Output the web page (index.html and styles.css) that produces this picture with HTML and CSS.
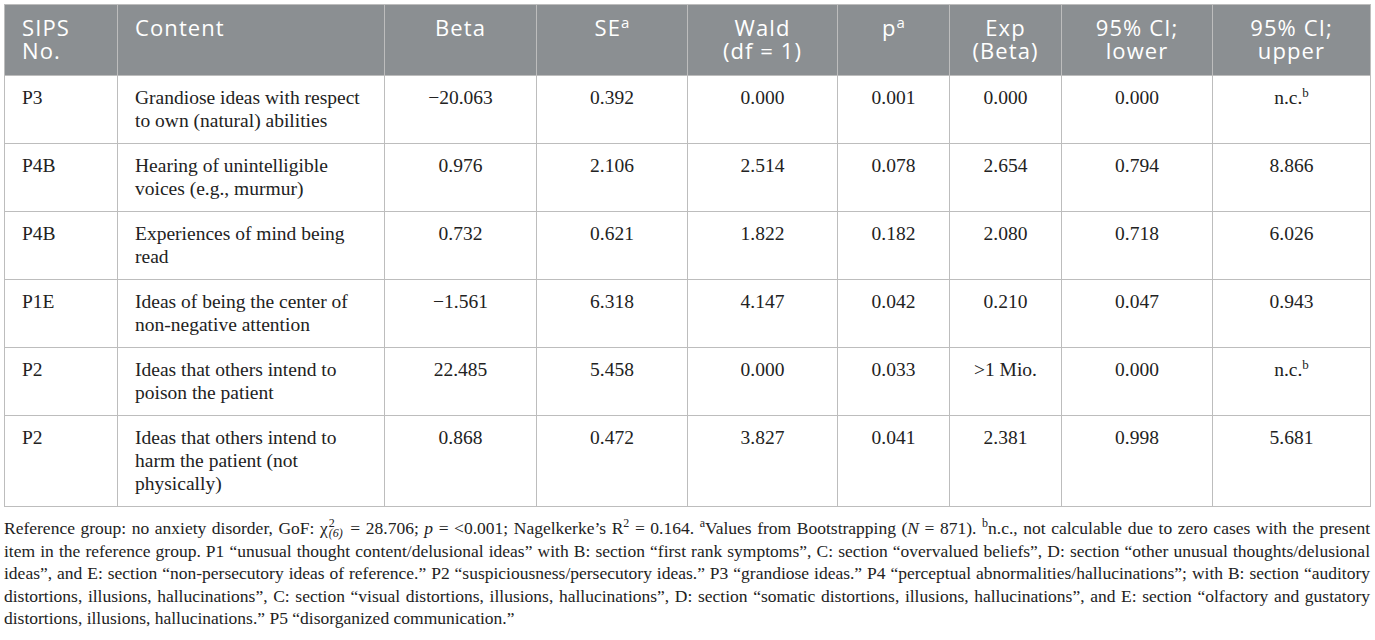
FILE: index.html
```html
<!DOCTYPE html>
<html lang="en">
<head>
<meta charset="utf-8">
<title>SIPS table</title>
<link rel="stylesheet" href="styles.css">
</head>
<body>
<div class="page">
<table class="tbl">
  <colgroup>
    <col class="c1"><col class="c2"><col class="c3"><col class="c4"><col class="c5"><col class="c6"><col class="c7"><col class="c8"><col class="c9">
  </colgroup>
  <thead>
    <tr>
      <th class="left">SIPS<br>No.</th>
      <th class="left">Content</th>
      <th>Beta</th>
      <th>SE<sup>a</sup></th>
      <th>Wald<br>(df = 1)</th>
      <th>p<sup>a</sup></th>
      <th>Exp<br>(Beta)</th>
      <th>95% CI;<br>lower</th>
      <th>95% CI;<br>upper</th>
    </tr>
  </thead>
  <tbody>
    <tr>
      <td class="left">P3</td>
      <td class="left">Grandiose ideas with respect to own (natural) abilities</td>
      <td>−20.063</td><td>0.392</td><td>0.000</td><td>0.001</td><td>0.000</td><td>0.000</td><td>n.c.<sup>b</sup></td>
    </tr>
    <tr>
      <td class="left">P4B</td>
      <td class="left">Hearing of unintelligible voices (e.g., murmur)</td>
      <td>0.976</td><td>2.106</td><td>2.514</td><td>0.078</td><td>2.654</td><td>0.794</td><td>8.866</td>
    </tr>
    <tr>
      <td class="left">P4B</td>
      <td class="left">Experiences of mind being read</td>
      <td>0.732</td><td>0.621</td><td>1.822</td><td>0.182</td><td>2.080</td><td>0.718</td><td>6.026</td>
    </tr>
    <tr>
      <td class="left">P1E</td>
      <td class="left">Ideas of being the center of non-negative attention</td>
      <td>−1.561</td><td>6.318</td><td>4.147</td><td>0.042</td><td>0.210</td><td>0.047</td><td>0.943</td>
    </tr>
    <tr>
      <td class="left">P2</td>
      <td class="left">Ideas that others intend to poison the patient</td>
      <td>22.485</td><td>5.458</td><td>0.000</td><td>0.033</td><td>&gt;1 Mio.</td><td>0.000</td><td>n.c.<sup>b</sup></td>
    </tr>
    <tr>
      <td class="left">P2</td>
      <td class="left">Ideas that others intend to harm the patient (not physically)</td>
      <td>0.868</td><td>0.472</td><td>3.827</td><td>0.041</td><td>2.381</td><td>0.998</td><td>5.681</td>
    </tr>
  </tbody>
</table>
<p class="note"><span class="ln">Reference group: no anxiety disorder, GoF: χ<span class="supsub"><span class="sp">2</span><span class="sb">(6)</span></span> = 28.706; <i>p</i> = &lt;0.001; Nagelkerke’s R<sup>2</sup> = 0.164. <sup>a</sup>Values from Bootstrapping (<i>N</i> = 871). <sup>b</sup>n.c., not calculable due to zero cases with the present</span>
<span class="ln">item in the reference group. P1 “unusual thought content/delusional ideas” with B: section “first rank symptoms”, C: section “overvalued beliefs”, D: section “other unusual thoughts/delusional</span>
<span class="ln">ideas”, and E: section “non-persecutory ideas of reference.” P2 “suspiciousness/persecutory ideas.” P3 “grandiose ideas.” P4 “perceptual abnormalities/hallucinations”; with B: section “auditory</span>
<span class="ln">distortions, illusions, hallucinations”, C: section “visual distortions, illusions, hallucinations”, D: section “somatic distortions, illusions, hallucinations”, and E: section “olfactory and gustatory</span>
<span class="ln ln-last">distortions, illusions, hallucinations.” P5 “disorganized communication.”</span></p>
</div>
</body>
</html>
```

FILE: styles.css
```css
html, body {
  margin: 0;
  padding: 0;
  background: #ffffff;
}

.page {
  padding: 4px 5px 0 4px;
}

.tbl {
  width: 1366px;
  border-collapse: collapse;
  table-layout: fixed;
  font-family: "Liberation Serif", "Times New Roman", serif;
  color: #222222;
}

.c1 { width: 113px; }
.c2 { width: 267px; }
.c3 { width: 152px; }
.c4 { width: 151px; }
.c5 { width: 150px; }
.c6 { width: 112px; }
.c7 { width: 112px; }
.c8 { width: 151px; }
.c9 { width: 158px; }

.tbl th {
  background: #8b8f92;
  color: #ffffff;
  font-family: "Open Sans", "Liberation Sans", sans-serif;
  font-weight: 400;
  font-size: 22px;
  letter-spacing: 1.1px;
  line-height: 23px;
  padding: 11px 8px 13px;
  text-align: center;
  vertical-align: top;
  border: 1px solid #bdbdbd;
}

.tbl th sup {
  font-size: 15px;
  line-height: 0;
  vertical-align: 8px;
  letter-spacing: 0;
}

.tbl td {
  font-size: 19.5px;
  line-height: 23px;
  padding: 10px 8px 11px;
  text-align: center;
  vertical-align: top;
  border: 1px solid #bdbdbd;
}

.tbl td sup {
  font-size: 13px;
  line-height: 0;
  vertical-align: 7px;
}

.tbl .left {
  text-align: left;
  padding-left: 17px;
  padding-right: 24px;
}

.note {
  margin: 10px 0 0 0;
  width: 1366px;
  font-family: "Liberation Serif", "Times New Roman", serif;
  font-size: 17.5px;
  line-height: 22.5px;
  color: #222222;
}

.note .ln {
  display: block;
  text-align: justify;
  text-align-last: justify;
}

.note .ln-last {
  text-align-last: left;
}

.note sup {
  font-size: 12px;
  line-height: 0;
  vertical-align: 7px;
}

.supsub {
  display: inline-flex;
  flex-direction: column;
  vertical-align: 7px;
  line-height: 10px;
  height: 10px;
  font-size: 12px;
  margin: 0 2px 0 1px;
}

.supsub .sb {
  font-style: italic;
}
```
